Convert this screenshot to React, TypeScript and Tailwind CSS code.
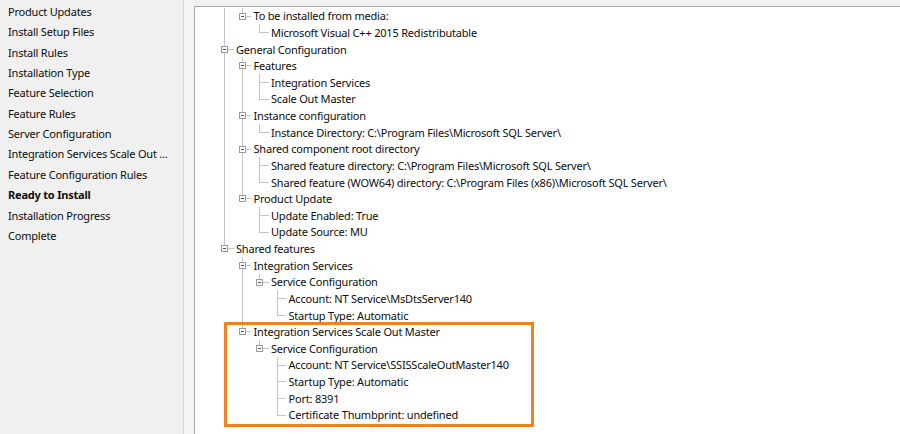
import React from 'react';

type Node = { d: number; text: string; exp?: boolean };

const steps = [
  'Product Updates',
  'Install Setup Files',
  'Install Rules',
  'Installation Type',
  'Feature Selection',
  'Feature Rules',
  'Server Configuration',
  'Integration Services Scale Out ...',
  'Feature Configuration Rules',
  'Ready to Install',
  'Installation Progress',
  'Complete',
];

const nodes: Node[] = [
  { d: 1, text: 'To be installed from media:', exp: true },
  { d: 2, text: 'Microsoft Visual C++ 2015 Redistributable' },
  { d: 0, text: 'General Configuration', exp: true },
  { d: 1, text: 'Features', exp: true },
  { d: 2, text: 'Integration Services' },
  { d: 2, text: 'Scale Out Master' },
  { d: 1, text: 'Instance configuration', exp: true },
  { d: 2, text: 'Instance Directory: C:\\Program Files\\Microsoft SQL Server\\' },
  { d: 1, text: 'Shared component root directory', exp: true },
  { d: 2, text: 'Shared feature directory: C:\\Program Files\\Microsoft SQL Server\\' },
  { d: 2, text: 'Shared feature (WOW64) directory: C:\\Program Files (x86)\\Microsoft SQL Server\\' },
  { d: 1, text: 'Product Update', exp: true },
  { d: 2, text: 'Update Enabled: True' },
  { d: 2, text: 'Update Source: MU' },
  { d: 0, text: 'Shared features', exp: true },
  { d: 1, text: 'Integration Services', exp: true },
  { d: 2, text: 'Service Configuration', exp: true },
  { d: 3, text: 'Account: NT Service\\MsDtsServer140' },
  { d: 3, text: 'Startup Type: Automatic' },
  { d: 1, text: 'Integration Services Scale Out Master', exp: true },
  { d: 2, text: 'Service Configuration', exp: true },
  { d: 3, text: 'Account: NT Service\\SSISScaleOutMaster140' },
  { d: 3, text: 'Startup Type: Automatic' },
  { d: 3, text: 'Port: 8391' },
  { d: 3, text: 'Certificate Thumbprint: undefined' },
];

// does the line at depth k carry on below row i?
function continues(i: number, k: number) {
  for (let j = i + 1; j < nodes.length; j++) {
    if (nodes[j].d < k) return false;
    if (nodes[j].d === k) return true;
  }
  return false;
}

const LINE = '#c4c4c4';

function Cell({ i, k, d, exp }: { i: number; k: number; d: number; exp?: boolean }) {
  const own = k === d;
  const down = continues(i, k);
  return (
    <svg width="17.5" height="16.625" viewBox="0 0 17.5 16.625" className="shrink-0" shapeRendering="crispEdges">
      {own ? (
        <>
          <line x1="8.5" y1="0" x2="8.5" y2={down ? 16.625 : 8.5} stroke={LINE} />
          <line x1="8.5" y1="8.5" x2="17.5" y2="8.5" stroke={LINE} />
          {exp && (
            <>
              <rect x="5.5" y="5.5" width="6" height="6" fill="#fff" stroke="#9a9a9a" />
              <line x1="7" y1="8.5" x2="10" y2="8.5" stroke="#555" />
            </>
          )}
        </>
      ) : (
        down && <line x1="8.5" y1="0" x2="8.5" y2="16.625" stroke={LINE} />
      )}
    </svg>
  );
}

export default function App() {
  return (
    <div className="flex h-[434px] w-[900px] overflow-hidden bg-[#f0f0f0] text-[11px] tracking-[-0.2px] text-[#0d0d0d] [font-family:'Noto_Sans',sans-serif]">
      <div className="w-[184px] shrink-0 border-r border-[#d6d6d6] pt-[2px]">
        {steps.map((s) => (
          <div
            key={s}
            className={`flex h-[20.36px] items-center pl-[8px] ${s === 'Ready to Install' ? 'font-bold' : ''}`}
          >
            {s}
          </div>
        ))}
      </div>
      <div className="w-[10px] shrink-0 bg-[#f5f5f5]" />
      <div className="relative mt-[6px] flex-1 border-l border-t border-[#a8a8a8] bg-white pl-[21px] pt-[0.5px]">
        {nodes.map((n, i) => (
          <div key={i} className="flex h-[16.625px] items-center whitespace-nowrap">
            {Array.from({ length: n.d + 1 }, (_, k) => (
              <Cell key={k} i={i} k={k} d={n.d} exp={n.exp} />
            ))}
            <span className="pl-[2.5px] leading-none">{n.text}</span>
          </div>
        ))}
        <div className="absolute left-[29px] top-[315px] h-[105px] w-[310px] border-[3px] border-[#f4811f]" />
      </div>
    </div>
  );
}
